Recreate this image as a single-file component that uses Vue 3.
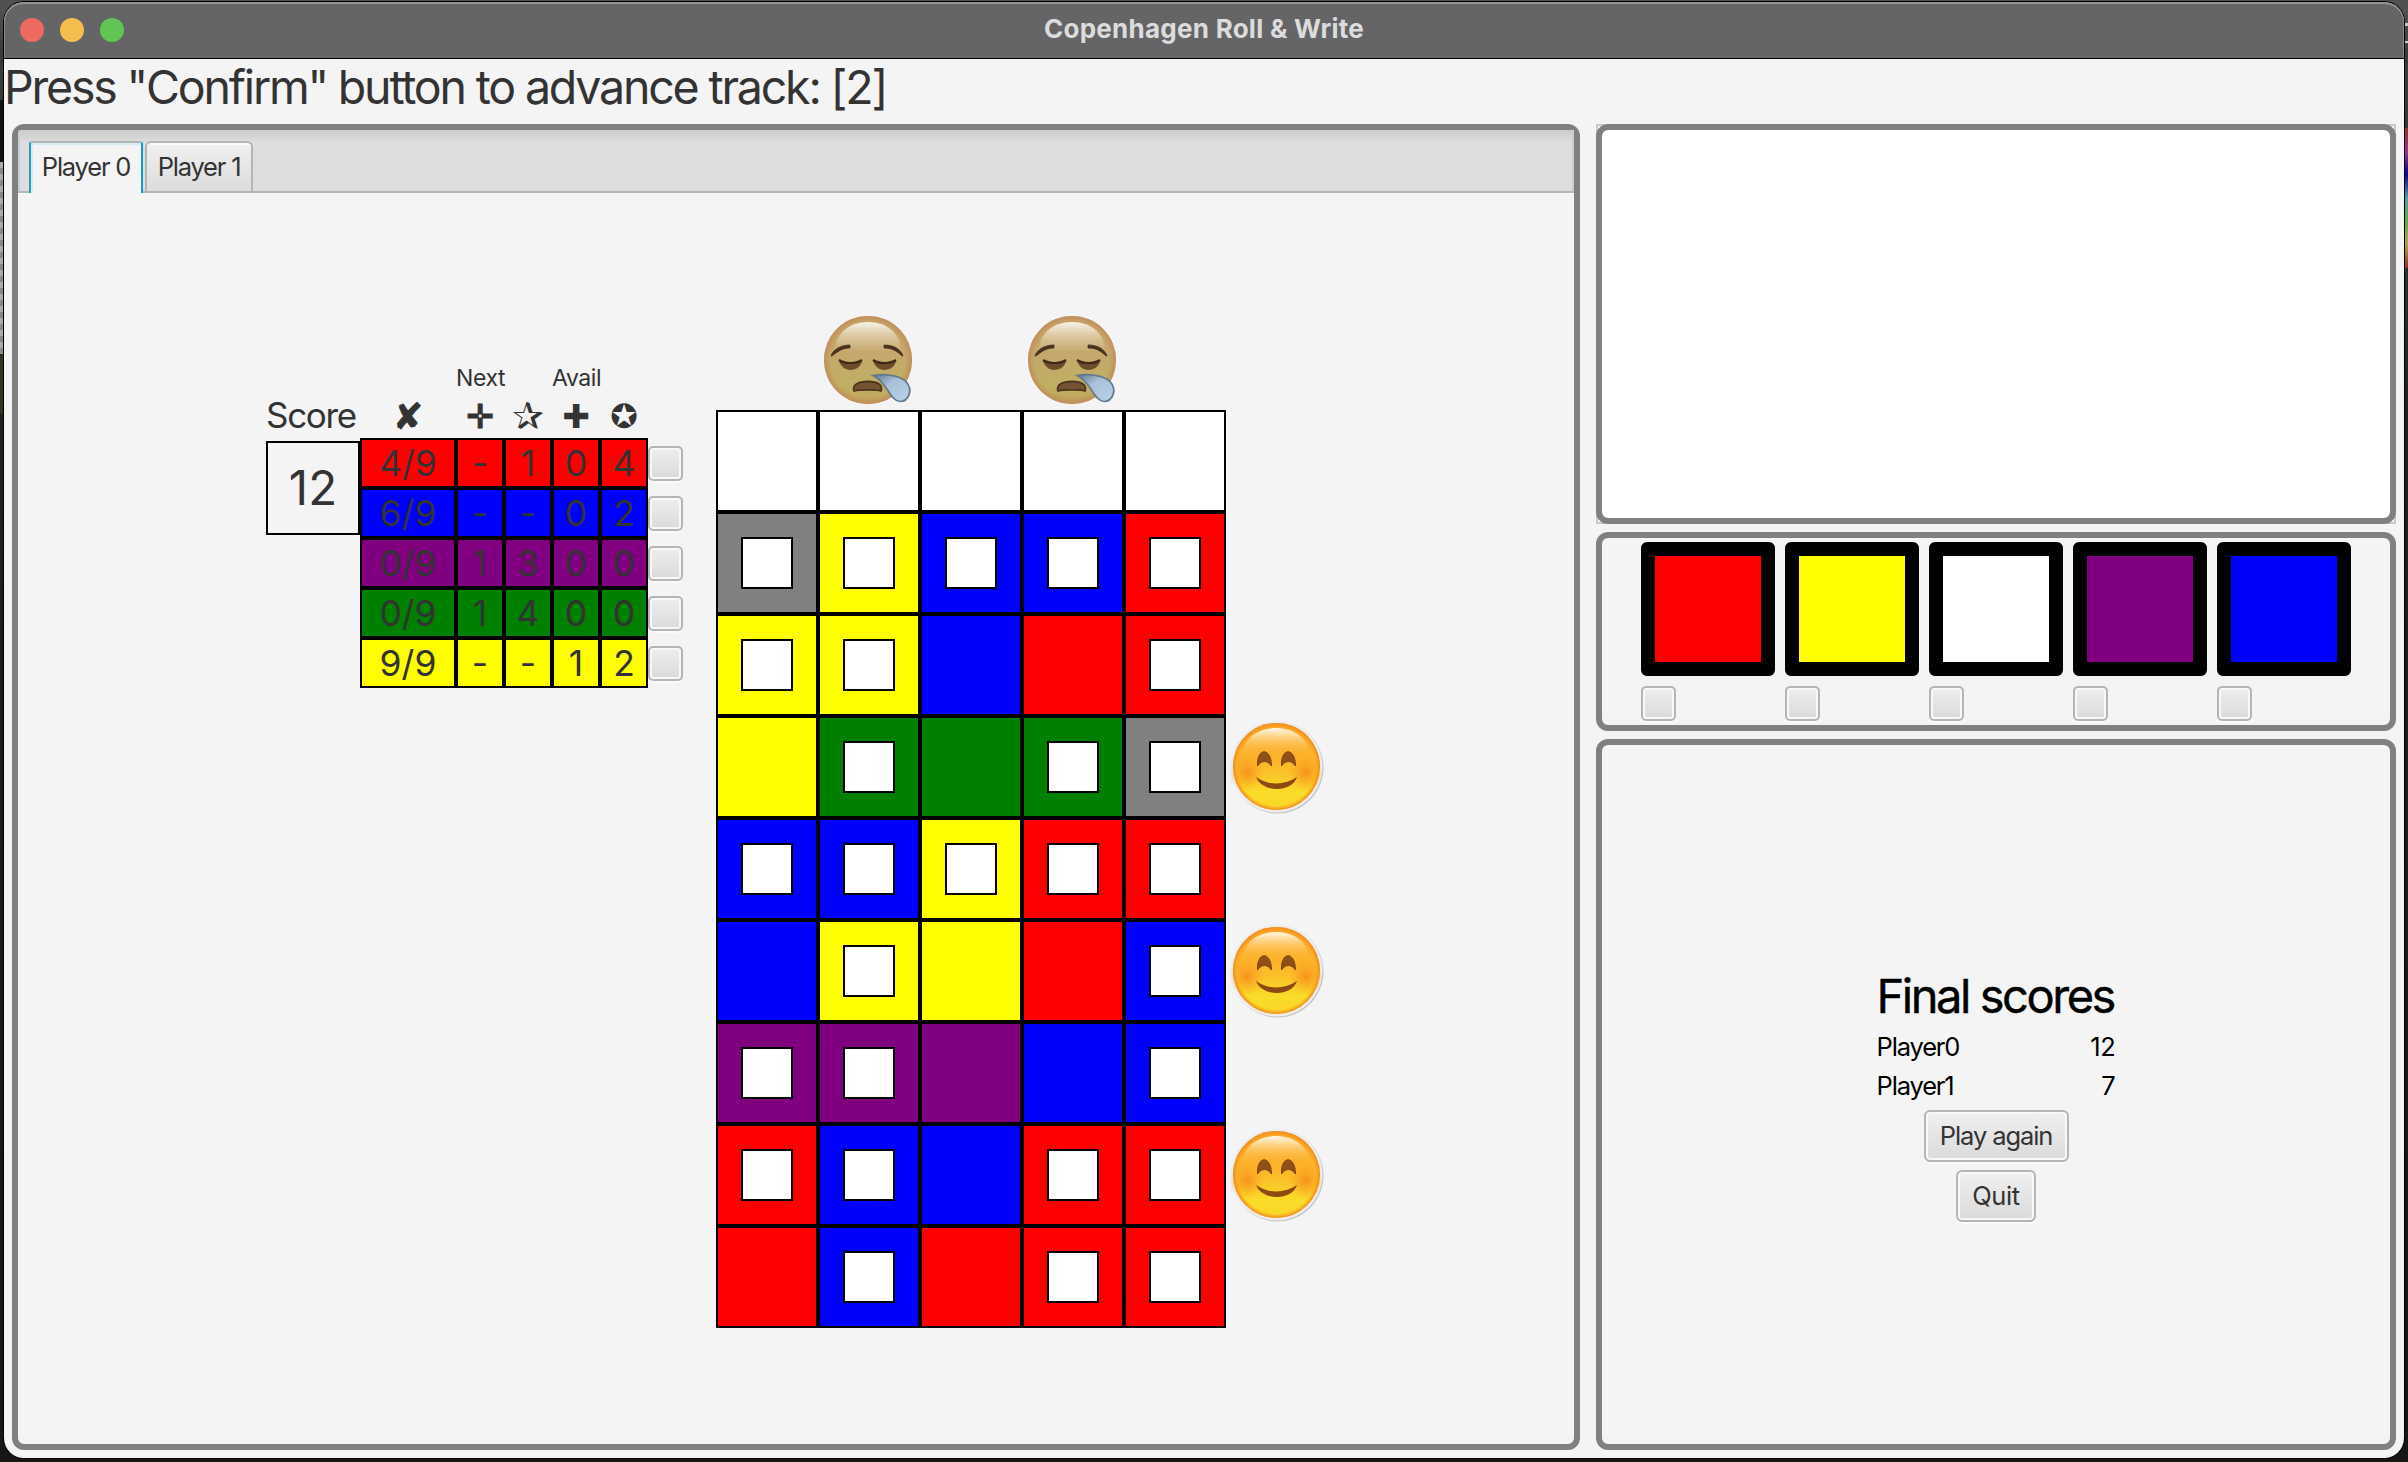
<script setup>
const scoreRows = [
  { color: 'red', cells: ['4/9', '-', '1', '0', '4'] },
  { color: 'blue', cells: ['6/9', '-', '-', '0', '2'] },
  { color: 'purple', cells: ['0/9', '1', '3', '0', '0'] },
  { color: 'green', cells: ['0/9', '1', '4', '0', '0'] },
  { color: 'yellow', cells: ['9/9', '-', '-', '1', '2'] },
]
const names = { w: 'white', k: 'gray', y: 'yellow', b: 'blue', r: 'red', g: 'green', p: 'purple' }
// Upper-case letters mark windows that are still open.
const facade = ['wwwww', 'KYBBR', 'YYbrR', 'yGgGK', 'BBYRR', 'bYyrB', 'PPpbB', 'RBbRR', 'rBrRR'].map((row) =>
  [...row].map((c) => ({ color: names[c.toLowerCase()], open: c !== c.toLowerCase() })),
)
const dice = ['red', 'yellow', 'white', 'purple', 'blue']
const bonusColumns = [false, true, false, true, false]
const bonusRows = [false, false, false, true, false, true, false, true, false]
</script>

<template>
  <div class="desktop">
    <div class="window">
      <header class="titlebar">
        <div class="lights"><i class="close"></i><i class="min"></i><i class="max"></i></div>
        <span class="title">Copenhagen Roll &amp; Write</span>
      </header>
      <div class="status"><span>Press "Confirm" button to advance track: [2]</span></div>
      <main class="body">
        <section class="panel left">
          <nav class="tabs">
            <div class="tab active"><span>Player 0</span></div>
            <div class="tab"><span>Player 1</span></div>
          </nav>
          <div class="board">
            <div class="scorecol">
              <div class="scorelabel">Score</div>
              <div class="scorebox">12</div>
            </div>
            <div class="tablewrap">
              <div class="groups"><span>Next</span><span>Avail</span></div>
              <div class="symbols"><span class="wide">✘</span><span class="hollow">✛</span><span class="star">✰</span><span>✚</span><span>✪</span></div>
              <div v-for="row in scoreRows" :key="row.color" class="srow">
                <div v-for="(c, i) in row.cells" :key="i" class="scell" :class="[row.color, { wide: i === 0 }]">{{ c }}</div>
                <div class="check"></div>
              </div>
            </div>
            <div class="facade">
              <div class="bonustop">
                <div v-for="(b, i) in bonusColumns" :key="i" class="slot">
                  <svg v-if="b" width="90" height="90" viewBox="0 0 90 90">
                    <defs>
                      <linearGradient id="sleepFace" x1="0" y1="0" x2="0" y2="1">
                        <stop offset="0" stop-color="#cda56a" /><stop offset=".45" stop-color="#c5a86c" />
                        <stop offset=".8" stop-color="#bfb062" /><stop offset="1" stop-color="#c3a45c" />
                      </linearGradient>
                      <linearGradient id="sleepShine" x1="0" y1="0" x2="0" y2="1">
                        <stop offset="0" stop-color="#f8f4ea" /><stop offset="1" stop-color="#cbb17c" stop-opacity=".5" />
                      </linearGradient>
                      <radialGradient id="sleepRim"><stop offset=".84" stop-color="#c0965c" stop-opacity="0" /><stop offset="1" stop-color="#c08d5c" /></radialGradient>
                      <linearGradient id="drop" x1="0" y1="0" x2="1" y2="1"><stop offset="0" stop-color="#5e7384" /><stop offset=".4" stop-color="#a9c2da" /><stop offset="1" stop-color="#b9d0e8" /></linearGradient>
                    </defs>
                    <circle cx="45" cy="45" r="44" fill="url(#sleepFace)" />
                    <circle cx="45" cy="45" r="44" fill="url(#sleepRim)" />
                    <path d="M12 35C13 18 26 7 45 7s32 11 33 28c-20 1-46 1-66 0z" fill="url(#sleepShine)" />
                    <path d="M8 41c2-6 9-11 19-11v3C18 33 13 38 9 41z" fill="#49321f" stroke="#49321f" stroke-width=".8" />
                    <path d="M61 30c11 0 17 5 19 11l-1 0C74 36 69 33 61 33z" fill="#49321f" stroke="#49321f" stroke-width=".8" />
                    <path d="M16 45c6 4 17 4 23 0 0 6-6 10-11.500 10S17 51 16 45z" fill="#6b4c2b" />
                    <path d="M50 45c6 4 17 4 23 0 0 6-6 10-11.500 10S51 51 50 45z" fill="#6b4c2b" />
                    <path d="M16 45c6 4 17 4 23 0M50 45c6 4 17 4 23 0" fill="none" stroke="#3d2a18" stroke-width="2.200" />
                    <path d="M31 76c-2-6 4-9.500 14-9.500s15 3.500 13 9.500c-4-1.500-22-1.500-27 0z" fill="#755332" stroke="#4d351d" stroke-width="1.800" />
                    <path d="M50 60.500c12-2 26-.5 33 6 8 9 2 20-6 20-11-1-12-19-27-26z" fill="url(#drop)" stroke="#64798b" stroke-width="1.700" />
                  </svg>
                </div>
              </div>
              <div v-for="(row, r) in facade" :key="r" class="frow">
                <div v-for="(cell, c) in row" :key="c" class="fcell" :class="cell.color"><div v-if="cell.open" class="pane"></div></div>
                <div class="bonusside">
                  <svg v-if="bonusRows[r]" width="94" height="94" viewBox="0 0 94 94">
                    <defs>
                      <linearGradient id="joyFace" x1="0" y1="0" x2="0" y2="1">
                        <stop offset="0" stop-color="#fca426" /><stop offset=".45" stop-color="#fcb52b" />
                        <stop offset=".8" stop-color="#f9dc28" /><stop offset="1" stop-color="#fbd629" />
                      </linearGradient>
                      <linearGradient id="joyShine" x1="0" y1="0" x2="0" y2="1"><stop offset="0" stop-color="#fffbea" /><stop offset="1" stop-color="#fdbb3c" stop-opacity="0" /></linearGradient>
                      <radialGradient id="blush"><stop offset="0" stop-color="#f78618" stop-opacity=".8" /><stop offset="1" stop-color="#f99a20" stop-opacity="0" /></radialGradient>
                      <radialGradient id="joyRim"><stop offset=".9" stop-color="#f29222" stop-opacity="0" /><stop offset="1" stop-color="#f08b1e" /></radialGradient>
                    </defs>
                    <circle cx="47.500" cy="47.500" r="46" fill="#c4c4c4" />
                    <circle cx="46.500" cy="46.500" r="46" fill="#ededee" />
                    <circle cx="46.500" cy="46.500" r="43.500" fill="url(#joyFace)" />
                    <path d="M12 36C13 19 27 8 46 8s33 11 34 28z" fill="url(#joyShine)" />
                    <circle cx="17" cy="53" r="18" fill="url(#blush)" /><circle cx="76" cy="53" r="18" fill="url(#blush)" />
                    <circle cx="46.500" cy="46.500" r="43.500" fill="url(#joyRim)" />
                    <path d="M27.500 46c-1-19 14-19 14 0-4-6-10-6-14 0zM51.500 46c-1-19 14-19 14 0-4-6-10-6-14 0z" fill="#8f5018" stroke="#7f4614" stroke-width="1" />
                    <path d="M26 57c11 8.500 29 8.500 41 0-5 16-35 16-41 0z" fill="#8e4a12" />
                  </svg>
                </div>
              </div>
            </div>
          </div>
        </section>
        <aside class="right">
          <div class="canvaswrap"><section class="panel canvas"></section></div>
          <section class="panel dicepanel">
            <div v-for="d in dice" :key="d" class="diebox"><div class="die" :class="d"></div><div class="check"></div></div>
          </section>
          <section class="panel results">
            <div class="final"><span>Final scores</span></div>
            <div class="pscore"><span>Player0</span><b>12</b></div>
            <div class="pscore"><span>Player1</span><b>7</b></div>
            <button class="btn again"><span>Play again</span></button>
            <button class="btn quit"><span>Quit</span></button>
          </section>
        </aside>
      </main>
    </div>
  </div>
</template>

<style>
body { background: #1d1d1e; overflow: hidden; }
</style>
<style scoped>
* { box-sizing: border-box; }
.desktop {
  width: 2408px; height: 1462px; padding: 2px 4px 4px; overflow: hidden; white-space: nowrap;
  font-family: Inter, "Liberation Sans", sans-serif; color: #333;
  background:
    linear-gradient(#a02a20, #a03090 17%, #0a00a0 33%, #4d9fae 50%, #58b040 66%, #b0a83c 83%, #a02a20) 2405px 128px / 3px 140px no-repeat,
    linear-gradient(#c8c8c8, #c8c8c8) 2405px 23px / 3px 3px no-repeat,
    linear-gradient(#c8c8c8, #c8c8c8) 2405px 41px / 3px 2px no-repeat,
    repeating-linear-gradient(#adada6 0 6px, #8b8b86 6px 12px) 0 162px / 3px 192px no-repeat,
    linear-gradient(#37321f, #37321f) 0 355px / 3px 59px no-repeat,
    linear-gradient(#15120e, #15120e) 0 100px / 3px 62px no-repeat,
    linear-gradient(#51524f 0, #51524f 12px, #3c3c3c 50px, #2e3333 240px, #1d1f20 420px, #171516);
}
.window { width: 2400px; height: 1456px; border-radius: 20px; background: #f4f4f4; box-shadow: 0 0 0 1px #000; overflow: hidden; display: flex; flex-direction: column; }
.titlebar { height: 57px; flex: none; background: #656567; border-bottom: 1px solid #000; box-shadow: inset 0 2px 0 #92938f, inset 1px 0 0 #858585, inset -1px 0 0 #858585; display: grid; grid-template-columns: 1fr auto 1fr; align-items: center; border-radius: 20px 20px 0 0; }
.lights { display: flex; gap: 16px; padding-left: 16px; }
.lights i { width: 24px; height: 24px; border-radius: 50%; }
.close { background: #ed6a5e; } .min { background: #f4bf4f; } .max { background: #61c554; }
.title { font-weight: 700; font-size: 26px; letter-spacing: .26px; color: #dcdcdc; padding-bottom: 3px; }
.status { height: 65px; flex: none; font-size: 46.500px; line-height: 57px; letter-spacing: -2.190px; }
.body { display: flex; gap: 16px; padding: 0 8px; height: 1326px; }
.panel { border: 6px solid gray; border-radius: 12px; background: #f4f4f4; }
.left { width: 1568px; }
.tabs { height: 63px; background: linear-gradient(#cbcbcb, #ddd 12px); box-shadow: inset 2px 0 0 #cdcdcd, inset -2px 0 0 #cdcdcd; border-bottom: 2px solid #b5b5b5; display: flex; gap: 2px; padding: 11px 0 0 11px; border-radius: 3px 0 0 0; }
.tab { width: 108px; height: 50px; border: 2px solid #b5b5b5; border-bottom: 0; border-radius: 6px 6px 0 0; background: linear-gradient(#f0f0f0, #dcdcdc); font-size: 25.500px; letter-spacing: -1.200px; line-height: 48px; text-align: center; box-shadow: inset 0 2px 0 #fafafa; }
.tab.active { width: 114px; height: 52px; background: #f4f4f4; border-color: #b5b5b5 #039ed3 #b5b5b5 #1f9fc8; border-radius: 3px 3px 0 0; box-shadow: inset 2px 2px 0 #d5edf5; }
.board { display: flex; padding-left: 248px; }
.scorecol { width: 94px; padding-top: 202px; }
.scorelabel { height: 46px; line-height: 40px; font-size: 35px; letter-spacing: -1.300px; }
.scorebox { width: 94px; height: 94px; border: 2px solid #000; font-size: 47.500px; line-height: 90px; text-align: center; }
.tablewrap { width: 356px; padding-top: 166px; }
.groups { display: flex; height: 36px; padding-left: 96px; font-size: 23px; letter-spacing: -.4px; line-height: 38px; }
.groups span { width: 96px; }
.symbols { display: flex; height: 43px; font: 33px/43px "DejaVu Sans", sans-serif; text-align: center; }
.symbols span { width: 48px; }
.symbols .wide { width: 96px; font-size: 36px; -webkit-text-stroke: .8px #333; }
.symbols .hollow { -webkit-text-stroke: 1px #333; }
.symbols .star { font-size: 38px; line-height: 42px; }
.srow { display: flex; height: 50px; align-items: center; }
.scell { width: 48px; height: 50px; border: 2px solid #000; font-size: 35.500px; line-height: 48px; text-align: center; }
.scell.wide { width: 96px; }
.check { width: 35px; height: 35px; border: 2px solid #b5b5b5; border-radius: 5px; background: linear-gradient(#eee, #dadada); box-shadow: inset 0 0 0 2px #f8f8f8, 0 2px 0 #fafafa; }
.facade { padding-top: 115px; }
.bonustop { display: flex; height: 102px; }
.slot { width: 102px; display: flex; justify-content: center; padding: 7px 2px 0 0; }
.frow { display: flex; height: 102px; }
.fcell { width: 102px; height: 102px; border: 2px solid #000; display: flex; align-items: center; justify-content: center; }
.pane { width: 52px; height: 52px; border: 2px solid #000; background: #fff; }
.bonusside { width: 100px; padding: 4px 0 0 4px; }
.red { background: #f00; } .blue { background: #00f; } .purple { background: #800080; } .green { background: #008000; } .yellow { background: #ff0; } .white { background: #fff; } .gray { background: #808080; }
.right { width: 800px; display: flex; flex-direction: column; gap: 8px; }
.canvaswrap { height: 400px; background: #fff; box-shadow: inset 0 0 0 2px #c8c8c8; display: flex; }
.canvas { flex: 1; background: #fff; background-clip: padding-box; }
.dicepanel { height: 199px; display: flex; justify-content: center; gap: 10px; padding-top: 4px; }
.die { width: 134px; height: 134px; border: 14px solid #000; border-radius: 6px; margin-bottom: 10px; }
.results { height: 711px; display: flex; flex-direction: column; align-items: center; padding-top: 222px; }
.final { height: 60px; width: 239px; font-size: 47px; line-height: 57px; letter-spacing: -2.450px; color: #000; -webkit-text-stroke: .4px #000; }
.pscore { height: 39px; width: 239px; display: flex; justify-content: space-between; font-size: 25.500px; letter-spacing: -1.150px; line-height: 39px; color: #000; }
.pscore b { font-weight: 400; letter-spacing: -.3px; }
.btn { font: inherit; font-size: 25.500px; letter-spacing: -1.100px; color: #333; height: 52px; padding: 0 0 2px; border: 2px solid #b5b5b5; border-radius: 6px; background: linear-gradient(#f0f0f0, #dadada); box-shadow: inset 0 0 0 2px #f8f8f8, 0 2px 0 #fafafa; }
.again { width: 145px; margin-top: 5px; }
.quit { width: 80px; margin-top: 8px; letter-spacing: -.4px; }
</style>
